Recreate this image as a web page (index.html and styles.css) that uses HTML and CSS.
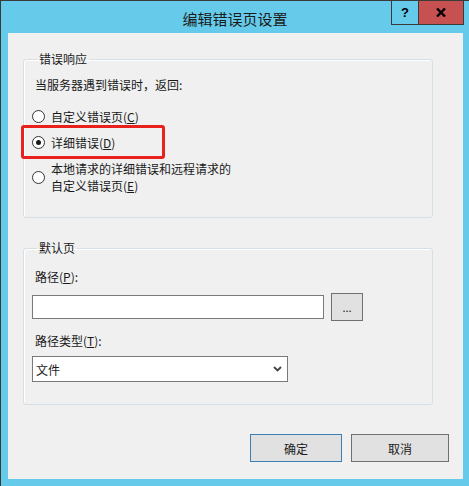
FILE: index.html
```html
<!DOCTYPE html>
<html lang="zh-CN">
<head>
<meta charset="utf-8">
<title>编辑错误页设置</title>
<link rel="stylesheet" href="styles.css">
</head>
<body>
<div class="window">
  <div class="titlebar">
    <div class="title">编辑错误页设置</div>
    <div class="caption-buttons">
      <div class="cap-btn help">?</div>
      <div class="cap-btn close">
        <svg width="10" height="9" viewBox="0 0 10 9"><path d="M1 0.5 L9 8.5 M9 0.5 L1 8.5" stroke="#000" stroke-width="2.4" fill="none"/></svg>
      </div>
    </div>
  </div>
  <div class="client">
    <fieldset class="group group-response">
      <legend>错误响应</legend>
      <div class="intro">当服务器遇到错误时，返回:</div>
      <div class="radios">
        <div class="radio-row"><span class="radio"></span><span class="radio-label">自定义错误页(<u>C</u>)</span></div>
        <div class="radio-row marked"><span class="radio checked"></span><span class="radio-label">详细错误(<u>D</u>)</span><span class="highlight"></span></div>
        <div class="radio-row"><span class="radio"></span><span class="radio-label">本地请求的详细错误和远程请求的<br>自定义错误页(<u>E</u>)</span></div>
      </div>
    </fieldset>
    <fieldset class="group group-default">
      <legend>默认页</legend>
      <div class="field-label">路径(<u>P</u>):</div>
      <div class="path-row">
        <div class="textbox"></div>
        <div class="browse-btn">...</div>
      </div>
      <div class="field-label type-label">路径类型(<u>T</u>):</div>
      <div class="combo">
        <span>文件</span>
        <svg width="9" height="6" viewBox="0 0 9 6"><path d="M1 1 L4.5 4.5 L8 1" stroke="#444" stroke-width="1.8" fill="none"/></svg>
      </div>
    </fieldset>
    <div class="dialog-buttons">
      <div class="btn btn-ok">确定</div>
      <div class="btn btn-cancel">取消</div>
    </div>
  </div>
</div>
</body>
</html>
```
FILE: styles.css
```css
* { box-sizing: border-box; }
body {
  margin: 0;
  font-family: "Noto Sans CJK SC", "Noto Sans", sans-serif;
  font-size: 12px;
  color: #1a1a1a;
}
.window {
  width: 469px;
  height: 486px;
  background: #66cbea;
  border-left: 1px solid #3a3a3a;
  border-top: 1px solid #3a3a3a;
  display: flex;
  flex-direction: column;
}
.titlebar {
  flex: none;
  height: 32px;
  display: grid;
}
.title, .caption-buttons { grid-area: 1 / 1; }
.title {
  justify-self: center;
  font-size: 15px;
  line-height: 20px;
  padding-top: 8px;
  color: #1a1a1a;
}
.caption-buttons {
  justify-self: end;
  align-self: start;
  display: flex;
  margin-right: 5px;
}
.cap-btn {
  height: 24px;
  display: flex;
  align-items: center;
  justify-content: center;
  border-left: 1px solid #3a3a3a;
  border-bottom: 1px solid #3a3a3a;
}
.help {
  width: 27px;
  font-family: "Liberation Sans", sans-serif;
  font-weight: bold;
  font-size: 13px;
  color: #000;
}
.close {
  width: 46px;
  background: #c75050;
  border-right: 1px solid #3a3a3a;
}
.client {
  flex: 1;
  margin: 0 6px 7px 7px;
  background: #f0f0f0;
  padding: 18px 30px 0 15px;
  display: flex;
  flex-direction: column;
}
.group {
  margin: 0;
  padding: 0 8px;
  border: 1px solid #d5dfe5;
  border-radius: 3px;
  min-width: 0;
  box-shadow: inset 1px 1px 0 #fff;
}
.group legend {
  padding: 0 2px;
  margin-left: 5px;
  line-height: 16px;
}
.group-response { padding-top: 9px; padding-bottom: 23px; }
.intro { line-height: 17px; padding-left: 3px; }
.radios {
  margin-top: 15px;
  display: flex;
  flex-direction: column;
  gap: 9px;
}
.radio-row {
  position: relative;
  display: flex;
  align-items: center;
  gap: 6px;
  line-height: 17px;
}
.radio {
  flex: none;
  width: 13px;
  height: 13px;
  border: 1px solid #333;
  border-radius: 50%;
  background: #fff;
  display: flex;
  align-items: center;
  justify-content: center;
}
.radio.checked::after {
  content: "";
  width: 5px;
  height: 5px;
  border-radius: 50%;
  background: #1a1a1a;
}
.highlight {
  position: absolute;
  left: -11px;
  top: -9px;
  width: 144px;
  height: 34px;
  border: 3px solid #e8211d;
  border-radius: 3px;
}
.group-default {
  margin-top: 22px;
  padding-top: 12px;
  padding-bottom: 22px;
}
.field-label { line-height: 17px; padding-left: 3px; }
.path-row {
  margin-top: 8px;
  display: flex;
  align-items: center;
  gap: 7px;
}
.textbox {
  width: 292px;
  height: 24px;
  background: #fff;
  border: 1px solid #7a7a7a;
}
.browse-btn {
  width: 32px;
  height: 28px;
  background: #e1e1e1;
  border: 1px solid #707070;
  display: flex;
  align-items: center;
  justify-content: center;
  font-size: 11px;
  line-height: 1;
}
.type-label { margin-top: 11px; }
.combo {
  margin-top: 7px;
  width: 256px;
  height: 26px;
  background: #fff;
  border: 1px solid #7a7a7a;
  display: flex;
  align-items: center;
  justify-content: space-between;
  padding: 0 5px 0 3px;
  line-height: 17px;
}
.dialog-buttons {
  margin-top: 29px;
  margin-right: -16px;
  display: flex;
  justify-content: flex-end;
  gap: 9px;
}
.btn {
  height: 28px;
  background: #e1e1e1;
  display: flex;
  align-items: center;
  justify-content: center;
  line-height: 17px;
}
.btn-ok { width: 92px; border: 1px solid #3c7fb1; }
.btn-cancel { width: 98px; border: 1px solid #707070; }
```
